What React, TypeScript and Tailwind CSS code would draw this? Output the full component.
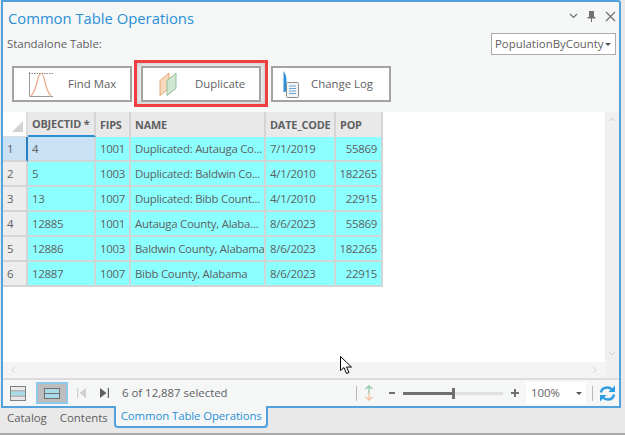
const cols = ["w-[68px]", "w-[35px]", "w-[135px]", "w-[70px]", "w-[47px]"];
const heads = ["OBJECTID *", "FIPS", "NAME", "DATE_CODE", "POP"];
const rows = [
  ["4", "1001", "Duplicated: Autauga Co...", "7/1/2019", "55869"],
  ["5", "1003", "Duplicated: Baldwin Co...", "4/1/2010", "182265"],
  ["13", "1007", "Duplicated: Bibb Count...", "4/1/2010", "22915"],
  ["12885", "1001", "Autauga County, Alaba...", "8/6/2023", "55869"],
  ["12886", "1003", "Baldwin County, Alabama", "8/6/2023", "182265"],
  ["12887", "1007", "Bibb County, Alabama", "8/6/2023", "22915"],
];

function FindMaxIcon() {
  return (
    <svg width="24" height="25" viewBox="0 0 24 25" fill="none">
      <path d="M.5 0v24.500H24" stroke="#9a9a9a" strokeWidth="1" />
      <path d="M0 1.500h24" stroke="#8a8a8a" strokeWidth="1" strokeDasharray="1.5 1" />
      <path d="M2 24 Q6 20 9 6 Q10.500 1.500 12 1.500 Q13.500 1.500 15 6 Q18 20 22 24" stroke="#eda98c" strokeWidth="1.2" />
    </svg>
  );
}
function DuplicateIcon() {
  return (
    <svg width="18" height="24" viewBox="0 0 18 24">
      <path d="M1 8.500 10 1v15.500L1 23.500z" fill="#f8d9bb" stroke="#e5a672" strokeWidth="1" />
      <path d="M8 8.500 17 1v15.500L8 23.500z" fill="#cfe6cf" stroke="#93bd9b" strokeWidth="1" />
    </svg>
  );
}
function LogIcon() {
  return (
    <svg width="17" height="28" viewBox="0 0 17 28">
      <path d="M1.500 1c2 3 3 6 3 9v9c0 2-1 3-1.500 3H1.500z" fill="#2f8fd6" />
      <rect x="4.500" y="12.500" width="12" height="15" rx="1" fill="#f3f4f6" stroke="#8c8c8c" />
      <path d="M7 16h7M7 18.500h7M7 21h7M7 23.500h7" stroke="#6aa6d8" strokeWidth="1" />
    </svg>
  );
}
function OpButton({ label, icon, iconClass, labelClass }: { label: string; icon: React.ReactNode; iconClass: string; labelClass: string }) {
  return (
    <div className="relative flex h-[36px] w-[120px] shrink-0 items-center border-2 border-[#a3a3a3] bg-white text-[11.4px] text-[#5f6062]">
      <div className={iconClass}>{icon}</div>
      <span className={labelClass}>{label}</span>
    </div>
  );
}

export default function App() {
  return (
    <div className="relative h-[435px] w-[625px] overflow-hidden bg-[#e9e9e9] text-[#5f6062] [font-family:'Open_Sans',sans-serif]">
      <div className="ml-[1px] flex h-[408px] w-[620px] flex-col rounded-tr-[3px] border-2 border-[#52a3dc] bg-[#f5f7f7]">
        <div className="flex h-[29px] shrink-0 items-center pl-[5px] pr-[3px] pt-[3px]">
          <span className="text-[14.8px] leading-none text-[#2a8fd6]">Common Table Operations</span>
          <div className="-mt-[4px] ml-auto flex items-center gap-[9px] text-[#6b6b6b]">
            <svg width="9" height="6" viewBox="0 0 9 6" fill="none"><path d="M1 1l3.500 3.500L8 1" stroke="#707070" strokeWidth="1.2" /></svg>
            <svg width="9" height="11" viewBox="0 0 9 11"><path d="M2 0h5v6h1.500v1.500H5V11H4V7.500H.5V6H2z" fill="#707070" /></svg>
            <svg width="11" height="11" viewBox="0 0 11 11" fill="none"><path d="M1 1l9 9M10 1l-9 9" stroke="#707070" strokeWidth="1.2" /></svg>
          </div>
        </div>
        <div className="flex h-[26px] shrink-0 items-center justify-between pl-[4px] pr-[3px]">
          <span className="text-[11.4px]">Standalone Table:</span>
          <div className="flex h-[22px] w-[125px] items-center justify-between border border-[#ababab] bg-white pl-[3px] pr-[4px] text-[11.4px]">
            <span>PopulationByCounty</span>
            <span className="h-0 w-0 border-x-[3px] border-t-[3px] border-x-transparent border-t-[#555]" />
          </div>
        </div>
        <div className="flex h-[55px] shrink-0 items-start pl-[9px] pt-[9px]">
          <OpButton label="Find Max" icon={<FindMaxIcon />} iconClass="ml-[15px]" labelClass="ml-[15px]" />
          <div className="ml-[2px] mr-[3px] -mt-[6px] flex h-[47px] w-[134px] shrink-0 items-center justify-center border-[3px] border-[#ef3f42] shadow-[inset_0_0_4px_2px_#cfcfcf]">
            <OpButton label="Duplicate" icon={<DuplicateIcon />} iconClass="ml-[16px]" labelClass="ml-[18px]" />
          </div>
          <OpButton label="Change Log" icon={<LogIcon />} iconClass="ml-[9px]" labelClass="ml-[12px]" />
        </div>
        <div className="flex min-h-0 flex-1">
          <div className="flex w-[602px] flex-col">
            <div className="flex-1 bg-white">
              <div className="flex h-[25px] text-[10.9px] font-bold tracking-[-0.2px]">
                <div className="relative h-full w-[25px] border-r-2 border-b border-[#dcdcdc] bg-white">
                  <div className="absolute bottom-[4px] right-[3px] h-0 w-0 border-b-[11px] border-l-[11px] border-b-[#d2d2d2] border-l-transparent" />
                </div>
                {heads.map((h, i) => (
                  <div key={h} className={`${cols[i]} flex h-full items-center border-r-2 border-[#d4d4d4] bg-[#e9e9e9] pl-[4px] pt-[1px] ${i === 0 ? "border-b-2 border-b-[#2a8fd6]" : ""}`}>
                    <span className="whitespace-nowrap">{h}</span>
                  </div>
                ))}
              </div>
              {rows.map((r, ri) => (
                <div key={r[0]} className="flex h-[25px] text-[11.4px] tracking-[-0.25px]">
                  <div className={`flex h-full w-[25px] items-center border-b-2 border-r-2 pl-[4px] ${ri === 0 ? "border-r-[#2a7fc0] border-b-[#d4d4d4] bg-[#c9e1f4]" : "border-[#d4d4d4] bg-[#ededed]"}`}>
                    {ri + 1}
                  </div>
                  {r.map((c, i) => (
                    <div key={i} className={`${cols[i]} flex h-full items-center overflow-hidden whitespace-nowrap border-b-2 border-r-2 border-[#cfd6d6] px-[4px] ${i === 4 ? "justify-end" : ""} ${ri === 0 && i === 0 ? "bg-[#c9e1f4]" : "bg-[#8cffff]"}`}>
                      {c}
                    </div>
                  ))}
                </div>
              ))}
            </div>
            <div className="flex h-[18px] shrink-0 items-center justify-between border-b-2 border-[#dcdcdc] bg-[#f4f4f4] px-[8px] pb-[1px]">
              <svg width="5" height="8" viewBox="0 0 5 8" fill="none"><path d="M4 1 1 4l3 3" stroke="#d0d0d0" /></svg>
              <svg width="5" height="8" viewBox="0 0 5 8" fill="none"><path d="M1 1l3 3-3 3" stroke="#d0d0d0" /></svg>
            </div>
          </div>
          <div className="flex w-[14px] flex-col justify-between border-b-2 border-[#dcdcdc] bg-[#f0f0f0] px-[3px] py-[5px]">
            <svg width="8" height="5" viewBox="0 0 8 5" fill="none"><path d="M1 4l3-3 3 3" stroke="#d0d0d0" /></svg>
            <svg width="8" height="5" viewBox="0 0 8 5" fill="none" className="mb-[17px]"><path d="M1 1l3 3 3-3" stroke="#d0d0d0" /></svg>
          </div>
        </div>
        <div className="flex h-[26px] shrink-0 items-center pl-[7px] pr-[3px] text-[11.4px]">
          <svg width="16" height="15" viewBox="0 0 16 15" className="mr-[10px]">
            <rect x=".5" y=".5" width="15" height="14" fill="#e8e8e8" stroke="#808080" />
            <path d="M1 5h14M1 10h14" stroke="#808080" />
            <rect x="1" y="5.500" width="14" height="4" fill="#a9dbea" />
          </svg>
          <div className="mr-[8px] flex h-[22px] w-[32px] items-center justify-center border-2 border-[#8fc8ec] bg-[#bdbdbd]">
            <svg width="16" height="11" viewBox="0 0 16 11">
              <rect x=".5" y=".5" width="15" height="10" fill="#a9dbea" stroke="#707070" />
              <path d="M1 5.500h14" stroke="#707070" />
            </svg>
          </div>
          <svg width="11" height="10" viewBox="0 0 11 10" className="mr-[12px]"><path d="M1 0v10h1.200V0zM10 0 3.500 5l6.500 5z" fill="#cfcfcf" /></svg>
          <svg width="11" height="10" viewBox="0 0 11 10" className="mr-[12px]"><path d="M1 0l6.500 5L1 10zM8.800 0v10H10V0z" fill="#606060" /></svg>
          <span>6 of 12,887 selected</span>
          <div className="ml-auto flex items-center">
            <div className="h-[15px] w-px bg-[#b8b8b8]" />
            <svg width="10" height="16" viewBox="0 0 10 16" fill="none" className="ml-[7px]">
              <path d="M5 8V1M1.500 4 5 1l3.500 3" stroke="#94c9a5" strokeWidth="1.4" />
              <path d="M5 8v7M1.500 12 5 15l3.500-3" stroke="#f2c6a0" strokeWidth="1.4" />
            </svg>
            <div className="ml-[15px] h-[2px] w-[6px] bg-[#707070]" />
            <div className="ml-[8px] flex h-[3px] w-[100px] items-center bg-[#e0e0e0]">
              <div className="h-[3px] w-[49px] bg-[#707070]" />
              <div className="h-[11px] w-[3px] bg-[#707070]" />
            </div>
            <svg width="8" height="8" viewBox="0 0 8 8" className="ml-[8px]"><path d="M3 0h2v3h3v2H5v3H3V5H0V3h3z" fill="#707070" /></svg>
            <div className="ml-[7px] flex h-[22px] w-[60px] items-center justify-between bg-white pl-[5px] pr-[4px]">
              <span>100%</span>
              <span className="h-0 w-0 border-x-[3px] border-t-[3px] border-x-transparent border-t-[#555]" />
            </div>
            <div className="ml-[6px] h-[15px] w-px bg-[#b8b8b8]" />
            <svg width="17" height="17" viewBox="0 0 17 17" fill="none" className="ml-[6px]">
              <path d="M2 7.500C2.500 4 5.500 2.500 8.500 2.500c2 0 3.500 1 4.500 2" stroke="#2f9be0" strokeWidth="2.400" />
              <path d="M16 .5v6.500h-6.500z" fill="#2f9be0" />
              <path d="M15 9.500c-.5 3.500-3.500 5-6.500 5-2 0-3.500-1-4.500-2" stroke="#2f9be0" strokeWidth="2.400" />
              <path d="M1 16.500V10h6.500z" fill="#2f9be0" />
            </svg>
          </div>
        </div>
      </div>
      <div className="ml-[2px] flex h-[25px] items-start whitespace-nowrap text-[11.4px]">
        <span className="ml-[5px] pt-[1px]">Catalog</span>
        <span className="ml-[13px] pt-[1px]">Contents</span>
        <span className="relative z-10 -mt-[2px] ml-[6px] flex h-[22px] w-[154px] items-center rounded-b-[4px] border-x-2 border-b-2 border-[#52a3dc] bg-[#f5f7f7] px-[5px] tracking-[-0.1px] text-[#2a8fd6]">Common Table Operations</span>
      </div>
      <div className="absolute bottom-0 left-0 right-0 h-[2px] bg-[#a8a8a8]" />
      <svg width="12" height="19" viewBox="0 0 12 19" className="absolute left-[340px] top-[356px]">
        <path d="M.5.500v14l3.500-3 2.500 6 2.500-1-2.500-5.500h5z" fill="white" stroke="black" strokeWidth="1" />
      </svg>
    </div>
  );
}
